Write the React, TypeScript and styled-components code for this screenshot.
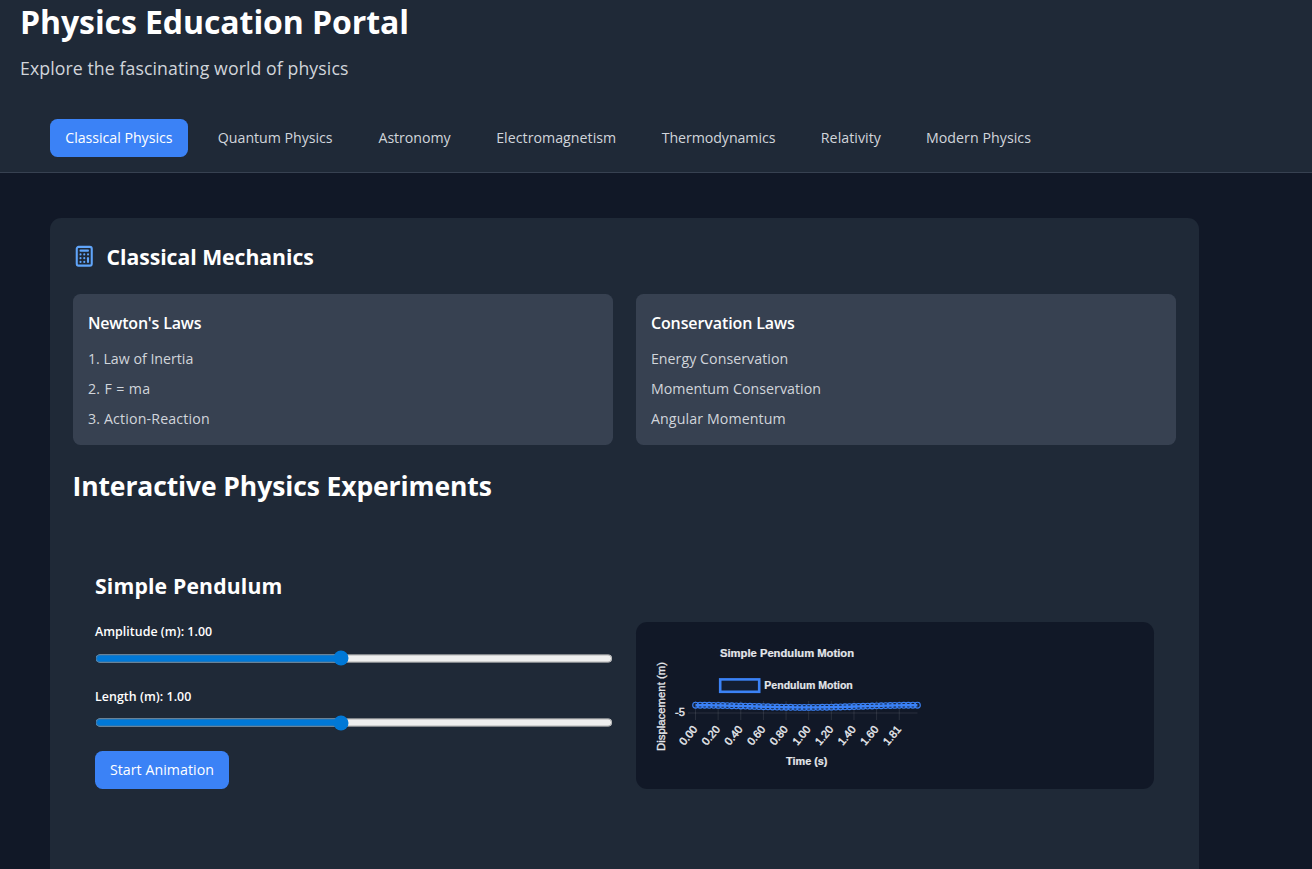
import React, { useState } from 'react';
import styled, { createGlobalStyle } from 'styled-components';
import { Calculator } from 'lucide-react';

const GlobalStyle = createGlobalStyle`
  * { box-sizing: border-box; }
  html, body { margin: 0; height: 869px; overflow: hidden; }
  body {
    background: #111827;
    color: #fff;
    font-family: "Segoe UI", "Open Sans", sans-serif;
    font-size: 14.2px;
  }
  h1, h2, h3, h4, p, ul { margin: 0; padding: 0; font-size: inherit; }
`;

const Header = styled.header`
  display: flex;
  flex-direction: column;
  height: 173px;
  background: #1f2937;
  border-bottom: 1px solid #374151;
`;

const SiteTitle = styled.h1`
  padding-left: 20px;
  font-size: 32px;
  font-weight: 700;
  line-height: 43px;
  letter-spacing: -0.08px;
`;

const Tagline = styled.p`
  padding: 11px 0 0 20px;
  color: #d1d5db;
  font-size: 17.7px;
  line-height: 28px;
  letter-spacing: 0.085px;
`;

const Nav = styled.nav`
  display: flex;
  gap: 15px;
  padding: 37px 50px 0;
`;

const NavButton = styled.button<{ $active: boolean; $width: number; $tracking: number }>`
  flex: none;
  width: ${(p) => p.$width}px;
  height: 38px;
  padding: 0;
  border: 0;
  border-radius: 7.5px;
  background: ${(p) => (p.$active ? '#3b82f6' : 'transparent')};
  color: ${(p) => (p.$active ? '#fff' : '#d1d5db')};
  font: inherit;
  line-height: 38px;
  letter-spacing: ${(p) => p.$tracking}px;
  white-space: nowrap;
  cursor: pointer;
`;

const Panel = styled.main`
  width: 1148.5px;
  height: 651px;
  margin: 45px 0 0 50px;
  padding: 22.5px 22.5px 0;
  border-radius: 11.25px 11.25px 0 0;
  background: #1f2937;
`;

const SectionHeading = styled.h2`
  display: flex;
  align-items: center;
  gap: 11.5px;
  height: 32px;
  font-size: 21.2px;
  font-weight: 700;
  line-height: 32px;
  letter-spacing: -0.03px;

  svg { color: #60a5fa; }
`;

const TwoColumns = styled.div`
  display: grid;
  grid-template-columns: 1fr 1fr;
  gap: 22.5px;
`;

const Laws = styled(TwoColumns)`
  margin-top: 21.5px;
`;

const LawCard = styled.article`
  height: 151px;
  padding: 15px 15px 15px 15.4px;
  border-radius: 7.5px;
  background: #374151;
`;

const LawTitle = styled.h3<{ $tracking: number }>`
  font-size: 16px;
  font-weight: 600;
  line-height: 28px;
  letter-spacing: ${(p) => p.$tracking}px;
`;

const LawList = styled.ul`
  margin-top: 10.5px;
  display: grid;
  gap: 7.5px;
  list-style: none;
  color: #d1d5db;
  line-height: 22.5px;
`;

const LawItem = styled.li<{ $tracking: number }>`
  letter-spacing: ${(p) => p.$tracking}px;
`;

const ExperimentsTitle = styled.h2`
  margin-top: 22.5px;
  font-size: 26.5px;
  font-weight: 700;
  line-height: 37px;
  letter-spacing: -0.115px;
`;

const Experiment = styled.section`
  margin-top: 44px;
  padding: 22.5px 22.5px 0;
`;

const ExperimentTitle = styled.h3`
  font-size: 21.2px;
  font-weight: 700;
  line-height: 30px;
  letter-spacing: 0.157px;
`;

const Workspace = styled(TwoColumns)`
  margin-top: 21px;
`;

const Controls = styled.div`
  display: flex;
  flex-direction: column;
  align-items: flex-start;
`;

const Field = styled.label<{ $tracking: number }>`
  display: flex;
  flex-direction: column;
  width: 100%;
  height: 64.5px;
  font-size: 12.4px;
  font-weight: 600;
  line-height: 19px;
  letter-spacing: ${(p) => p.$tracking}px;
`;

const Slider = styled.input`
  display: block;
  width: 518px;
  height: 15px;
  margin: 9.5px 0 0;
  accent-color: #0078d7;
`;

const StartButton = styled.button`
  width: 134px;
  height: 38px;
  padding: 0;
  border: 0;
  border-radius: 7.5px;
  background: #3b82f6;
  color: #fff;
  font: inherit;
  line-height: 38px;
  letter-spacing: 0.05px;
  cursor: pointer;
`;

const ChartCard = styled.div`
  height: 167px;
  border-radius: 11.25px;
  background: #111827;
`;

const ChartSvg = styled.svg`
  display: block;
  font-family: Arial, "Liberation Sans", sans-serif;
  font-size: 11px;
  fill: #e5e7eb;
`;

const topics = [
  { name: 'Classical Physics', width: 137.7, tracking: -0.027 },
  { name: 'Quantum Physics', width: 145.1, tracking: -0.027 },
  { name: 'Astronomy', width: 103.5, tracking: -0.062 },
  { name: 'Electromagnetism', width: 149.9, tracking: 0.03 },
  { name: 'Thermodynamics', width: 144.7, tracking: -0.064 },
  { name: 'Relativity', width: 90.1, tracking: 0.05 },
  { name: 'Modern Physics', width: 135, tracking: 0.05 },
];

const lawGroups = [
  {
    title: "Newton's Laws",
    tracking: -0.18,
    items: [
      { text: '1. Law of Inertia', tracking: 0 },
      { text: '2. F = ma', tracking: 0.35 },
      { text: '3. Action-Reaction', tracking: 0.16 },
    ],
  },
  {
    title: 'Conservation Laws',
    tracking: -0.1,
    items: [
      { text: 'Energy Conservation', tracking: 0.05 },
      { text: 'Momentum Conservation', tracking: 0.045 },
      { text: 'Angular Momentum', tracking: 0.12 },
    ],
  },
];

const timeLabels = ['0.00', '0.20', '0.40', '0.60', '0.80', '1.00', '1.20', '1.40', '1.60', '1.81'];

const samples = Array.from({ length: 50 }, (_, i) => ({
  x: 59.6 + (i * 221.8) / 49,
  y: 84.3 - 1.1 * Math.cos((2 * Math.PI * i) / 49),
}));

function PendulumChart() {
  return (
    <ChartSvg width="518" height="167" viewBox="0 0 518 167">
      <g stroke="#fff" strokeOpacity="0.1">
        {timeLabels.map((label, i) => (
          <line key={label} x1={59.5 + i * 22.64} x2={59.5 + i * 22.64} y1="79" y2="98" />
        ))}
        <line x1="52" x2="281.5" y1="91" y2="91" />
      </g>
      <polyline
        points={samples.map((s) => `${s.x},${s.y}`).join(' ')}
        fill="none"
        stroke="#3b82f6"
        strokeWidth="2.4"
      />
      <g fill="#3b82f6" fillOpacity="0.1" stroke="#3b82f6" strokeWidth="1.1">
        {samples.map((s) => (
          <circle key={s.x} cx={s.x} cy={s.y} r="2.9" />
        ))}
      </g>
      <text x="84" y="35" fontWeight="700" stroke="#e5e7eb" strokeWidth="0.2" textLength="134" lengthAdjust="spacingAndGlyphs">
        Simple Pendulum Motion
      </text>
      <rect x="84.2" y="57.4" width="39" height="12.4" fill="#3b82f6" fillOpacity="0.06" stroke="#3b82f6" strokeWidth="2.6" />
      <text x="128.3" y="66.8" fontWeight="700" stroke="#e5e7eb" strokeWidth="0.2" textLength="88.5" lengthAdjust="spacingAndGlyphs">
        Pendulum Motion
      </text>
      <text transform="translate(29 129) rotate(-90)" stroke="#e5e7eb" strokeWidth="0.3" textLength="89" lengthAdjust="spacingAndGlyphs">
        Displacement (m)
      </text>
      <text x="39" y="93.8" stroke="#e5e7eb" strokeWidth="0.4">-5</text>
      <g stroke="#e5e7eb" strokeWidth="0.4" textAnchor="end">
        {timeLabels.map((label, i) => (
          <text key={label} transform={`translate(${62 + i * 22.64} 107.5) rotate(-50)`}>{label}</text>
        ))}
      </g>
      <text x="150" y="143" fontWeight="700" stroke="#e5e7eb" strokeWidth="0.2" textLength="41.5" lengthAdjust="spacingAndGlyphs">
        Time (s)
      </text>
    </ChartSvg>
  );
}

export default function App() {
  const [topic, setTopic] = useState('Classical Physics');
  const [amplitude, setAmplitude] = useState(1);
  const [length, setLength] = useState(1);

  return (
    <>
      <GlobalStyle />
      <Header>
        <SiteTitle>Physics Education Portal</SiteTitle>
        <Tagline>Explore the fascinating world of physics</Tagline>
        <Nav>
          {topics.map((t) => (
            <NavButton
              key={t.name}
              $active={t.name === topic}
              $width={t.width}
              $tracking={t.tracking}
              onClick={() => setTopic(t.name)}
            >
              {t.name}
            </NavButton>
          ))}
        </Nav>
      </Header>
      <Panel>
        <SectionHeading>
          <Calculator size={22.5} strokeWidth={2.2} />
          Classical Mechanics
        </SectionHeading>
        <Laws>
          {lawGroups.map((group) => (
            <LawCard key={group.title}>
              <LawTitle $tracking={group.tracking}>{group.title}</LawTitle>
              <LawList>
                {group.items.map((item) => (
                  <LawItem key={item.text} $tracking={item.tracking}>{item.text}</LawItem>
                ))}
              </LawList>
            </LawCard>
          ))}
        </Laws>
        <ExperimentsTitle>Interactive Physics Experiments</ExperimentsTitle>
        <Experiment>
          <ExperimentTitle>Simple Pendulum</ExperimentTitle>
          <Workspace>
            <Controls>
              <Field $tracking={0.037}>
                Amplitude (m): {amplitude.toFixed(2)}
                <Slider type="range" min="0.1" max="2" step="0.1" value={amplitude} onChange={(e) => setAmplitude(+e.target.value)} />
              </Field>
              <Field $tracking={0.05}>
                Length (m): {length.toFixed(2)}
                <Slider type="range" min="0.1" max="2" step="0.1" value={length} onChange={(e) => setLength(+e.target.value)} />
              </Field>
              <StartButton>Start Animation</StartButton>
            </Controls>
            <ChartCard>
              <PendulumChart />
            </ChartCard>
          </Workspace>
        </Experiment>
      </Panel>
    </>
  );
}
